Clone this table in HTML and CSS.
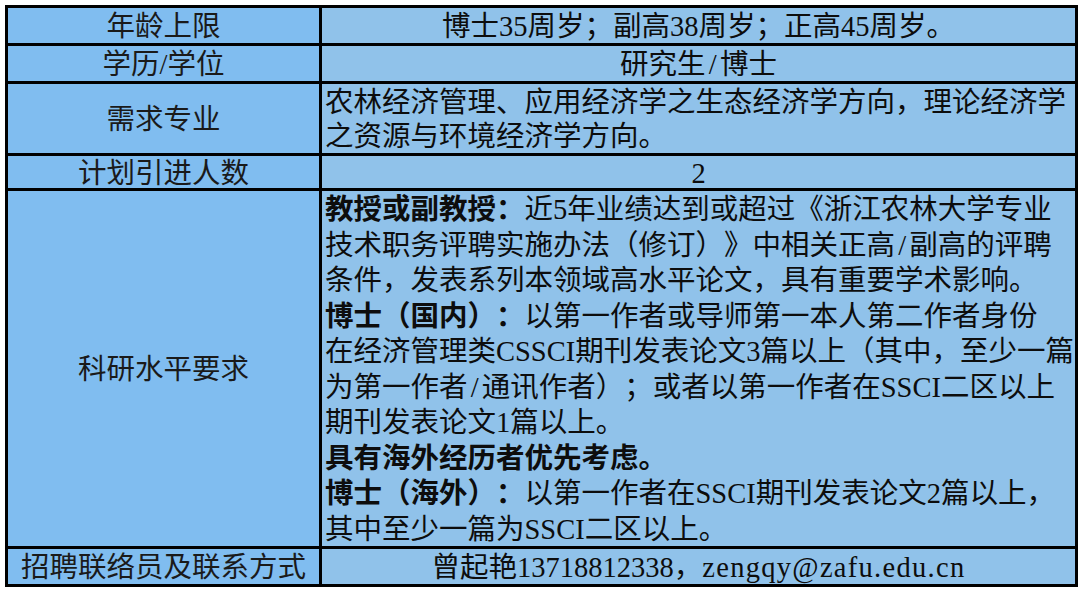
FILE: index.html
```html
<!DOCTYPE html>
<html lang="zh-CN">
<head>
<meta charset="utf-8">
<title>招聘信息</title>
<link rel="stylesheet" href="styles.css">
</head>
<body>
<div class="sheet">
  <div class="table">
    <div class="cell label r1">年龄上限</div>
    <div class="cell value center r1">博士35周岁；副高38周岁；正高45周岁。</div>

    <div class="cell label r2">学历/学位</div>
    <div class="cell value center r2">研究生<span class="slash">/</span>博士</div>

    <div class="cell label r3">需求专业</div>
    <div class="cell value left r3">农林经济管理、应用经济学之生态经济学方向，理论经济学<br>之资源与环境经济学方向。</div>

    <div class="cell label r4">计划引进人数</div>
    <div class="cell value center r4">2</div>

    <div class="cell label r5">科研水平要求</div>
    <div class="cell value left r5"><b>教授或副教授：</b>近5年业绩达到或超过《浙江农林大学专业<br>技术职务评聘实施办法（修订）》中相关正高<span class="slash">/</span>副高的评聘<br>条件，发表系列本领域高水平论文，具有重要学术影响。<br><b>博士（国内）：</b>以第一作者或导师第一本人第二作者身份<br>在经济管理类CSSCI期刊发表论文3篇以上（其中，至少一篇<br>为第一作者<span class="slash">/</span>通讯作者）；或者以第一作者在SSCI二区以上<br>期刊发表论文1篇以上。<br><b>具有海外经历者优先考虑。</b><br><b>博士（海外）：</b>以第一作者在SSCI期刊发表论文2篇以上，<br>其中至少一篇为SSCI二区以上。</div>

    <div class="cell label r6">招聘联络员及联系方式</div>
    <div class="cell value center r6">曾起艳13718812338，<span class="email">zengqy@zafu.edu.cn</span></div>
  </div>
</div>
</body>
</html>
```

FILE: styles.css
```css
html, body {
  margin: 0;
  padding: 0;
  background: #ffffff;
}

.sheet {
  padding: 5px 2px 2px 5px;
}

.table {
  display: grid;
  width: 1067px;
  grid-template-columns: 311px 753px;
  grid-template-rows: 35px 35px 69px 32px 355px 35px;
  gap: 3px;
  padding: 3px;
  background: #000000;
  font-family: "Liberation Serif", "Noto Sans CJK SC", serif;
  font-size: 28.5px;
  color: #0d0d0d;
  text-spacing-trim: space-all;
}

.cell {
  white-space: nowrap;
  overflow: hidden;
  box-sizing: border-box;
}

.label {
  background: #80bdf0;
  color: #1a1a1a;
  display: flex;
  align-items: center;
  justify-content: center;
  padding-top: 3px;
  line-height: 32px;
}

.value {
  background: #90c2ea;
}

.center {
  display: flex;
  align-items: center;
  justify-content: center;
  padding-top: 2px;
  line-height: 33px;
}

.left {
  padding-left: 3px;
  padding-top: 2px;
}

.r3.left {
  line-height: 34px;
}

.r5.left {
  padding-top: 1px;
  line-height: 35.5px;
}

.slash {
  display: inline-block;
  width: 0.5em;
  text-align: center;
}

.email {
  letter-spacing: 1.3px;
}

b {
  font-weight: 700;
}
```
